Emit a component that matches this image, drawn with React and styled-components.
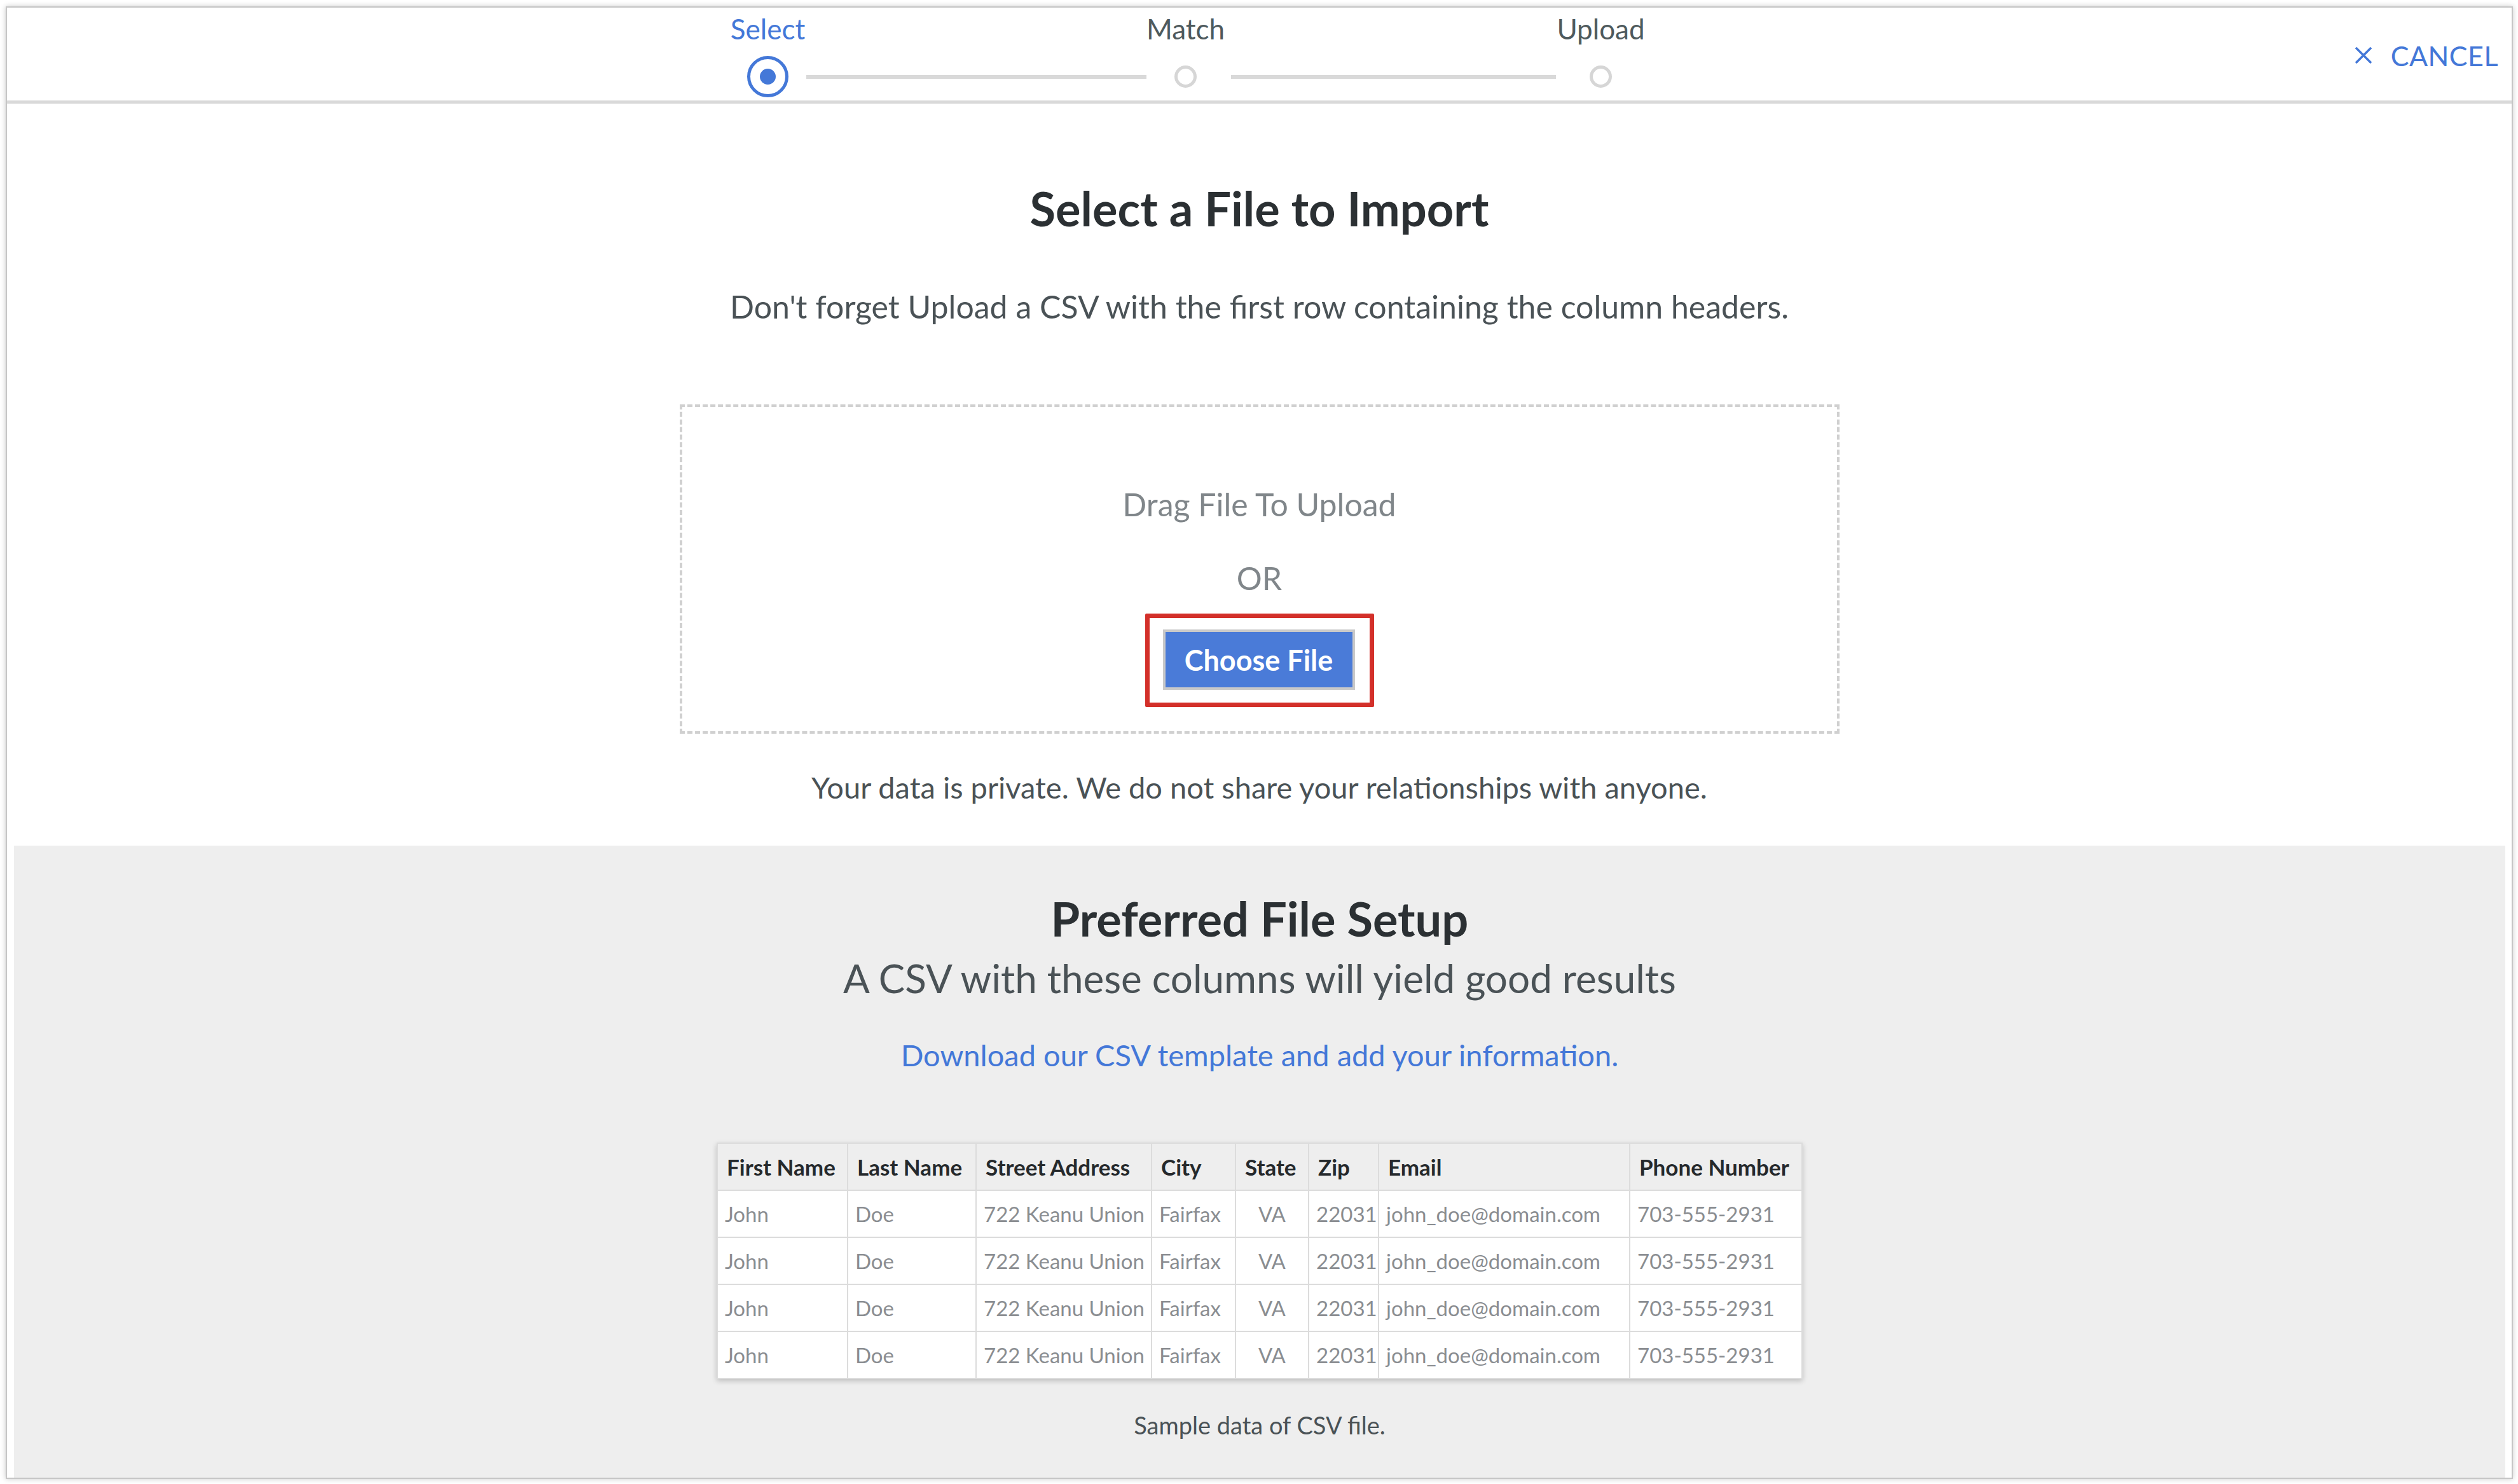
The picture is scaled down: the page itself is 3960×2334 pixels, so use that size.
import React from "react";
import styled, { createGlobalStyle } from "styled-components";

const GlobalStyle = createGlobalStyle`
  html, body { margin: 0; padding: 0; height: 100%; background: #ffffff; }
  #root { height: 100%; }
  * { box-sizing: border-box; }
  body { font-family: "Lato", "Open Sans", sans-serif; color: #2e3437; }
`;

const BLUE = "#4478d8";

const Card = styled.div`
  margin: 10px 8px 8px 9px;
  height: calc(100vh - 18px);
  border: 2px solid #c6c6c6;
  box-shadow: 0 0 8px rgba(0, 0, 0, 0.22);
  background: #ffffff;
  display: flex;
  flex-direction: column;
`;

const Header = styled.header`
  display: flex;
  align-items: stretch;
  height: 151px;
  flex-shrink: 0;
  border-bottom: 5px solid #d9d9d9;
  padding: 0 21px 0 1164px;
`;

const Stepper = styled.div`
  display: flex;
  align-items: flex-end;
  padding-top: 9px;
  align-self: flex-start;
`;

const Step = styled.div`
  display: flex;
  flex-direction: column;
  align-items: center;
  gap: 19px;
  width: ${(p) => p.$size}px;
`;

const StepLabel = styled.div`
  font-size: 44px;
  line-height: 48px;
  white-space: nowrap;
  color: ${(p) => (p.$active ? BLUE : "#4e5a5d")};
`;

const CircleSlot = styled.div`
  height: 65px;
  width: ${(p) => p.$size}px;
  display: flex;
  align-items: center;
  justify-content: center;
`;

const ActiveCircle = styled.div`
  width: 65px;
  height: 65px;
  border-radius: 50%;
  border: 5px solid ${BLUE};
  display: flex;
  align-items: center;
  justify-content: center;
  &::after {
    content: "";
    width: 25px;
    height: 25px;
    border-radius: 50%;
    background: ${BLUE};
  }
`;

const IdleCircle = styled.div`
  width: 35px;
  height: 35px;
  border-radius: 50%;
  border: 5px solid #d6d6d6;
`;

const Connector = styled.div`
  height: 6px;
  width: ${(p) => p.$w}px;
  margin: 0 ${(p) => p.$r}px 29px ${(p) => p.$l}px;
  background: #d9d9d9;
`;

const Cancel = styled.button`
  margin-left: auto;
  align-self: center;
  display: flex;
  align-items: center;
  gap: 28px;
  background: none;
  border: none;
  padding: 0;
  margin-top: 4px;
  color: ${BLUE};
  font-family: "Lato", sans-serif;
  font-size: 43px;
  letter-spacing: 0.5px;
  text-transform: uppercase;
  cursor: pointer;
`;

const Main = styled.main`
  flex: 1;
  display: flex;
  flex-direction: column;
  align-items: center;
`;

const Title = styled.h1`
  margin: 125px 0 0;
  font-size: 74px;
  line-height: 80px;
  font-weight: 700;
  color: #2b3033;
`;

const Lead = styled.p`
  margin: ${(p) => p.$mt}px 0 0;
  font-size: ${(p) => p.$fs}px;
  line-height: ${(p) => p.$lh}px;
  color: #4a5256;
`;

const Dropzone = styled.div`
  margin-top: 124px;
  width: 1824px;
  border: 4px dashed #d0d0d0;
  padding: 123px 0 38px;
  display: flex;
  flex-direction: column;
  align-items: center;
`;

const DropText = styled.div`
  margin-top: ${(p) => p.$mt || 0}px;
  font-size: 50px;
  line-height: 60px;
  color: #80868a;
`;

const Highlight = styled.div`
  margin-top: 26px;
  border: 7px solid #d3302a;
  border-radius: 2px;
  padding: 18px 23px 20px 21px;
`;

const ChooseButton = styled.button`
  width: 302px;
  height: 95px;
  border: 4px solid #c9c9c9;
  background: #4a7bd8;
  color: #ffffff;
  font-family: "Lato", sans-serif;
  font-weight: 700;
  font-size: 45px;
  cursor: pointer;
`;

const Setup = styled.section`
  flex: 1;
  margin: 62px 10px 0 11px;
  align-self: stretch;
  background: #eeeeee;
  display: flex;
  flex-direction: column;
  align-items: center;
  padding-top: 75px;
`;

const SetupTitle = styled.h2`
  margin: 0;
  font-size: 74px;
  line-height: 80px;
  font-weight: 700;
  color: #2b3033;
`;

const TemplateLink = styled.a`
  margin-top: 56px;
  font-size: 47px;
  line-height: 60px;
  color: ${BLUE};
  text-decoration: none;
  cursor: pointer;
`;

const Table = styled.table`
  margin-top: 108px;
  width: 1706px;
  table-layout: fixed;
  border-collapse: collapse;
  background: #ffffff;
  box-shadow: 0 3px 8px rgba(0, 0, 0, 0.2);
`;

const Col = styled.col`
  width: ${(p) => p.$w}px;
`;

const Th = styled.th`
  height: 74px;
  padding: 0 0 0 14px;
  text-align: left;
  font-size: 35px;
  font-weight: 700;
  color: #25292c;
  background: #eeeeee;
  border: 2px solid #dcdcdc;
  white-space: nowrap;
`;

const Td = styled.td`
  height: 74px;
  padding: 0 0 0 ${(p) => (p.$center ? 0 : 11)}px;
  text-align: ${(p) => (p.$center ? "center" : "left")};
  font-size: 33px;
  color: #8a8d91;
  border: 2px solid #dcdcdc;
  white-space: nowrap;
`;

const Caption = styled.div`
  margin-top: 48px;
  font-size: 38px;
  line-height: 48px;
  color: #4a5256;
`;

const columns = [
  { name: "First Name", w: 205 },
  { name: "Last Name", w: 202 },
  { name: "Street Address", w: 276 },
  { name: "City", w: 132 },
  { name: "State", w: 115 },
  { name: "Zip", w: 110 },
  { name: "Email", w: 395 },
  { name: "Phone Number", w: 271 },
];

const row = ["John", "Doe", "722 Keanu Union", "Fairfax", "VA", "22031", "john_doe@domain.com", "703-555-2931"];
const rows = [row, row, row, row];

const XIcon = () => (
  <svg width="30" height="30" viewBox="0 0 30 30" aria-hidden="true">
    <path d="M3 3 L27 27 M27 3 L3 27" stroke={BLUE} strokeWidth="3.5" fill="none" />
  </svg>
);

export default function App() {
  return (
    <>
      <GlobalStyle />
      <Card>
        <Header>
          <Stepper>
            <Step $size={65}>
              <StepLabel $active>Select</StepLabel>
              <CircleSlot $size={65}>
                <ActiveCircle />
              </CircleSlot>
            </Step>
            <Connector $w={535} $l={28} $r={44} />
            <Step $size={35}>
              <StepLabel>Match</StepLabel>
              <CircleSlot $size={35}>
                <IdleCircle />
              </CircleSlot>
            </Step>
            <Connector $w={511} $l={54} $r={53} />
            <Step $size={35}>
              <StepLabel>Upload</StepLabel>
              <CircleSlot $size={35}>
                <IdleCircle />
              </CircleSlot>
            </Step>
          </Stepper>
          <Cancel>
            <XIcon />
            Cancel
          </Cancel>
        </Header>
        <Main>
          <Title>Select a File to Import</Title>
          <Lead $mt={84} $fs={50} $lh={60}>
            Don't forget Upload a CSV with the first row containing the column headers.
          </Lead>
          <Dropzone>
            <DropText>Drag File To Upload</DropText>
            <DropText $mt={56}>OR</DropText>
            <Highlight>
              <ChooseButton>Choose File</ChooseButton>
            </Highlight>
          </Dropzone>
          <Lead $mt={54} $fs={47} $lh={60}>
            Your data is private. We do not share your relationships with anyone.
          </Lead>
          <Setup>
            <SetupTitle>Preferred File Setup</SetupTitle>
            <Lead $mt={18} $fs={62} $lh={70}>
              A CSV with these columns will yield good results
            </Lead>
            <TemplateLink>Download our CSV template and add your information.</TemplateLink>
            <Table>
              <colgroup>
                {columns.map((c) => (
                  <Col key={c.name} $w={c.w} />
                ))}
              </colgroup>
              <thead>
                <tr>
                  {columns.map((c) => (
                    <Th key={c.name}>{c.name}</Th>
                  ))}
                </tr>
              </thead>
              <tbody>
                {rows.map((r, i) => (
                  <tr key={i}>
                    {r.map((v, j) => (
                      <Td key={j} $center={j === 4}>
                        {v}
                      </Td>
                    ))}
                  </tr>
                ))}
              </tbody>
            </Table>
            <Caption>Sample data of CSV file.</Caption>
          </Setup>
        </Main>
      </Card>
    </>
  );
}
